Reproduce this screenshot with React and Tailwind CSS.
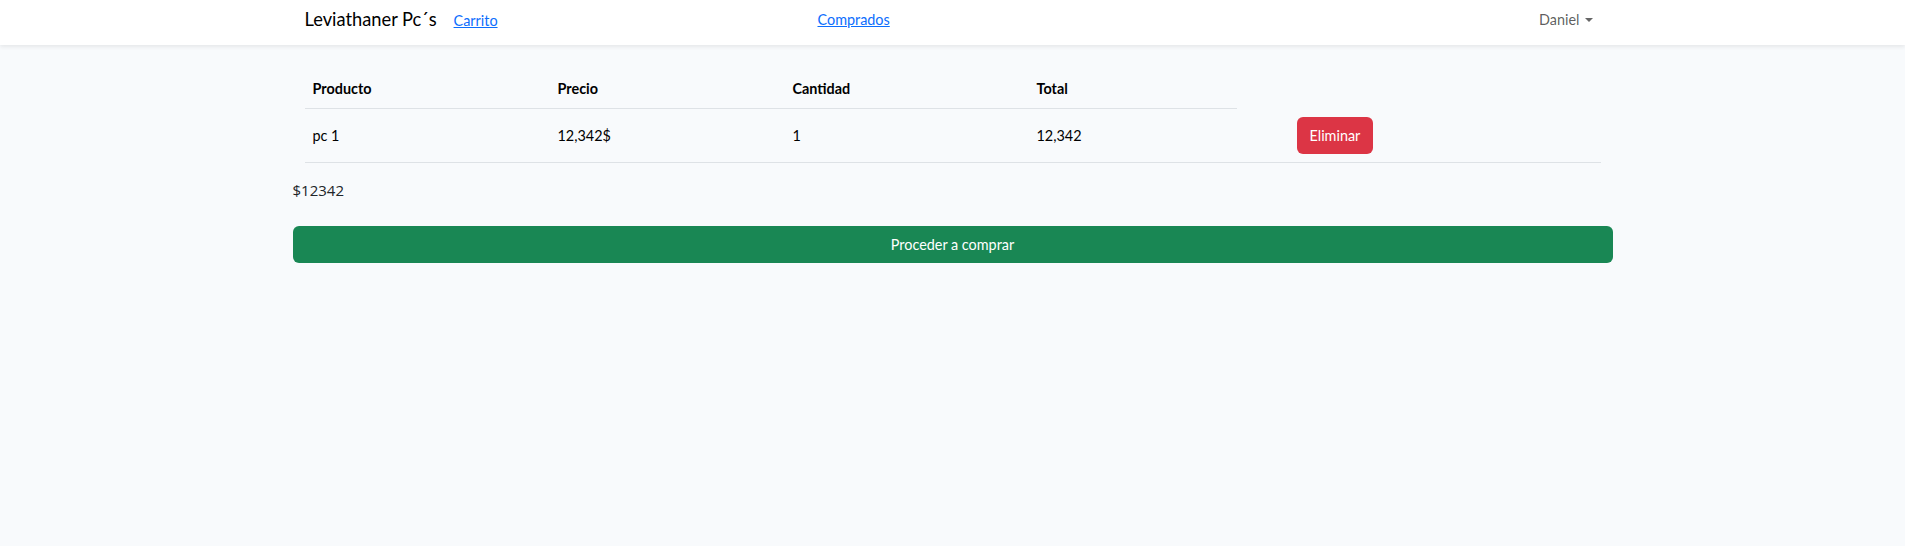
export default function App() {
  return (
    <div className="min-h-[546px] bg-[#f8fafc] font-[Lato,sans-serif] text-[#212529]">
      <nav className="h-[45px] bg-white shadow-[0_2px_4px_rgba(0,0,0,0.075)]">
        <div className="mx-auto flex h-full w-[1320px] items-center px-3 pb-[6px]">
          <div className="flex w-[513px] items-baseline">
            <span className="text-[18.3px] text-black">Leviathaner Pc´s</span>
            <a href="#" className="ml-[17px] text-[14.4px] text-[#0d6efd] underline">Carrito</a>
          </div>
          <a href="#" className="text-[14.4px] text-[#0d6efd] underline">Comprados</a>
          <div className="ml-auto flex items-center pr-2 text-[14.4px] text-black/65">
            <span>Daniel</span>
            <span className="ml-[5px] mt-[1px] h-0 w-0 border-x-[4.3px] border-t-[4.3px] border-x-transparent border-t-black/60"></span>
          </div>
        </div>
      </nav>

      <main className="mx-auto w-[1320px] pt-6">
        <div className="px-3 text-[14.4px]">
          <div className="grid grid-cols-[245px_235px_244px_208px_1fr] font-bold text-black">
            <div className="border-b border-[#dee2e6] px-2 py-2 leading-[23px]">Producto</div>
            <div className="border-b border-[#dee2e6] px-2 py-2 leading-[23px]">Precio</div>
            <div className="border-b border-[#dee2e6] px-2 py-2 leading-[23px]">Cantidad</div>
            <div className="border-b border-[#dee2e6] px-2 py-2 leading-[23px]">Total</div>
            <div></div>
          </div>
          <div className="grid grid-cols-[245px_235px_244px_208px_1fr] items-center border-b border-[#dee2e6] text-black">
            <div className="px-2 py-2 leading-[23px]">pc 1</div>
            <div className="px-2 py-2 leading-[23px]">12,342$</div>
            <div className="px-2 py-2 leading-[23px]">1</div>
            <div className="px-2 py-2 leading-[23px]">12,342</div>
            <div className="py-2 pl-[60px]">
              <button className="h-[37px] rounded-md bg-[#dc3545] px-[13px] text-[14.4px] leading-[23px] text-white">Eliminar</button>
            </div>
          </div>
        </div>
        <p className="mt-[15px] font-['Open_Sans',sans-serif] text-[15px] leading-[24px] text-[#212529]">$12342</p>
        <button className="mt-[24px] h-[37px] w-full rounded-md bg-[#198754] text-[14.4px] leading-[23px] text-white">Proceder a comprar</button>
      </main>
    </div>
  );
}
